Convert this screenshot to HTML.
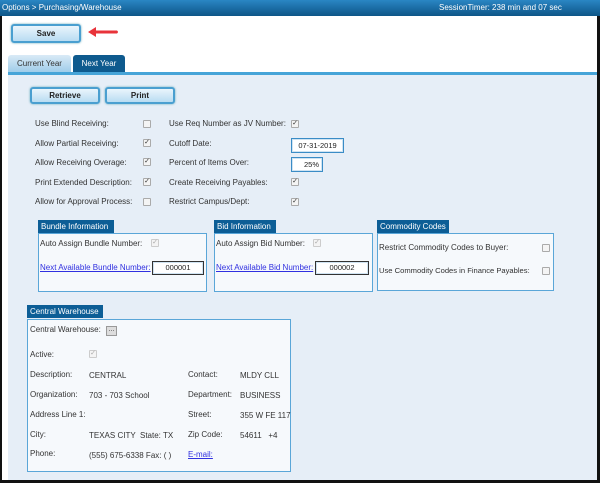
<!DOCTYPE html><html><head><style>
*{margin:0;padding:0;box-sizing:border-box}
body{width:600px;height:483px;position:relative;overflow:hidden;background:#fff;font-family:"Liberation Sans",sans-serif;font-size:8px;color:#333}
.a{position:absolute;white-space:nowrap}
.top{left:0;top:0;width:600px;height:16px;background:linear-gradient(#2a86c4,#0d5587);color:#fff;font-size:8px;line-height:16px}
.btn{position:absolute;border:2px solid #4a9fd0;border-radius:3px;background:linear-gradient(#eaf5fc,#b9dcf2);font-weight:bold;font-size:8px;text-align:center;color:#222;box-shadow:0 0 2px #6ab}
.cb{position:absolute;width:8px;height:8px;border:1px solid #aaa;background:#f4f4f4;border-radius:1px;font-size:7px;line-height:6px;text-align:center;color:#333}
.inp{position:absolute;border:1px solid #3a8cc6;background:#fff;box-shadow:inset 0 0 0 1px #cfe3f2;font-size:7.5px;text-align:center;color:#222}
.tab{position:absolute;background:#0d5e96;color:#fff;font-size:8px;line-height:13px;padding-left:3px;white-space:nowrap;overflow:hidden}
.box{position:absolute;border:1px solid #5aa6d8;background:#f6f9fc}
.lnk{color:#3030e0;text-decoration:underline}
</style></head><body>
<div class="a top"><span style="position:absolute;left:2px">Options &gt; Purchasing/Warehouse</span><span style="position:absolute;left:439px">SessionTimer: 238 min and 07 sec</span></div>
<div class="a" style="left:0;top:16px;width:2px;height:467px;background:#111"></div>
<div class="a" style="left:597px;top:16px;width:3px;height:467px;background:#111"></div>
<div class="a" style="left:0;top:480px;width:600px;height:3px;background:#111"></div>
<div class="btn" style="left:11px;top:24px;width:70px;height:19px;line-height:15px">Save</div>
<svg class="a" style="left:86px;top:26px" width="34" height="12"><path d="M2 6 L10 1 L10 4.5 L31 4.5 Q33 6 31 7.5 L10 7.5 L10 11 Z" fill="#e8333a"/></svg>
<div class="a" style="left:8px;top:55px;width:63px;height:18px;background:linear-gradient(#d9eaf6,#9ccbe9);border-radius:3px 3px 0 0;color:#333;line-height:18px;text-align:center">Current Year</div>
<div class="a" style="left:73px;top:55px;width:52px;height:18px;background:#0e5a8e;border-radius:3px 3px 0 0;color:#fff;line-height:18px;text-align:center">Next Year</div>
<div class="a" style="left:8px;top:72px;width:589px;height:3px;background:#46a4d8"></div>
<div class="a" style="left:8px;top:75px;width:589px;height:405px;background:#e6eef7"></div>
<div class="btn" style="left:30px;top:87px;width:70px;height:17px;line-height:13px">Retrieve</div>
<div class="btn" style="left:105px;top:87px;width:70px;height:17px;line-height:13px">Print</div>
<div class="a" style="left:35px;top:119px">Use Blind Receiving:</div><div class="cb" style="left:143px;top:120px"></div>
<div class="a" style="left:35px;top:139px">Allow Partial Receiving:</div><div class="cb" style="left:143px;top:139px">✓</div>
<div class="a" style="left:35px;top:158px">Allow Receiving Overage:</div><div class="cb" style="left:143px;top:158px">✓</div>
<div class="a" style="left:35px;top:178px">Print Extended Description:</div><div class="cb" style="left:143px;top:178px">✓</div>
<div class="a" style="left:35px;top:197px">Allow for Approval Process:</div><div class="cb" style="left:143px;top:198px"></div>
<div class="a" style="left:169px;top:119px">Use Req Number as JV Number:</div><div class="cb" style="left:291px;top:120px">✓</div>
<div class="a" style="left:169px;top:139px">Cutoff Date:</div><div class="inp" style="left:291px;top:138px;width:53px;height:15px;line-height:13px">07-31-2019</div>
<div class="a" style="left:169px;top:158px">Percent of Items Over:</div><div class="inp" style="left:291px;top:157px;width:32px;height:15px;line-height:13px;text-align:right;padding-right:3px">25%</div>
<div class="a" style="left:169px;top:178px">Create Receiving Payables:</div><div class="cb" style="left:291px;top:178px">✓</div>
<div class="a" style="left:169px;top:197px">Restrict Campus/Dept:</div><div class="cb" style="left:291px;top:198px">✓</div>

<div class="tab" style="left:38px;top:220px;width:76px">Bundle Information</div>
<div class="box" style="left:38px;top:233px;width:169px;height:59px"></div>
<div class="a" style="left:40px;top:239px">Auto Assign Bundle Number:</div><div class="cb" style="left:151px;top:239px;border-color:#ccc;color:#aaa">✓</div>
<div class="a lnk" style="left:40px;top:263px">Next Available Bundle Number:</div><div class="inp" style="left:152px;top:261px;width:52px;height:14px;line-height:12px;border-color:#333">000001</div>
<div class="tab" style="left:214px;top:220px;width:62px">Bid Information</div>
<div class="box" style="left:214px;top:233px;width:159px;height:59px"></div>
<div class="a" style="left:216px;top:239px">Auto Assign Bid Number:</div><div class="cb" style="left:313px;top:239px;border-color:#ccc;color:#aaa">✓</div>
<div class="a lnk" style="left:216px;top:263px">Next Available Bid Number:</div><div class="inp" style="left:315px;top:261px;width:54px;height:14px;line-height:12px;border-color:#333">000002</div>
<div class="tab" style="left:377px;top:220px;width:72px">Commodity Codes</div>
<div class="box" style="left:377px;top:233px;width:177px;height:58px"></div>
<div class="a" style="left:379px;top:243px">Restrict Commodity Codes to Buyer:</div><div class="cb" style="left:542px;top:244px"></div>
<div class="a" style="left:379px;top:266px;font-size:7.6px">Use Commodity Codes in Finance Payables:</div><div class="cb" style="left:542px;top:267px"></div>

<div class="tab" style="left:27px;top:305px;width:76px">Central Warehouse</div>
<div class="box" style="left:27px;top:319px;width:264px;height:153px"></div>
<div class="a" style="left:30px;top:325px">Central Warehouse:</div><div class="a" style="left:106px;top:326px;width:11px;height:10px;background:#ddd;border:1px solid #999;font-size:7px;line-height:5px;text-align:center">...</div>
<div class="a" style="left:30px;top:350px">Active:</div><div class="cb" style="left:89px;top:350px;border-color:#ccc;color:#aaa">✓</div>
<div class="a" style="left:30px;top:370px">Description:</div><div class="a" style="left:89px;top:371px">CENTRAL</div>
<div class="a" style="left:30px;top:390px">Organization:</div><div class="a" style="left:89px;top:391px">703 - 703 School</div>
<div class="a" style="left:30px;top:410px">Address Line 1:</div>
<div class="a" style="left:30px;top:430px">City:</div><div class="a" style="left:89px;top:431px">TEXAS CITY &nbsp;State: TX</div>
<div class="a" style="left:30px;top:449px">Phone:</div><div class="a" style="left:89px;top:451px">(555) 675-6338 Fax: ( )</div>
<div class="a" style="left:188px;top:370px">Contact:</div><div class="a" style="left:240px;top:371px">MLDY CLL</div>
<div class="a" style="left:188px;top:390px">Department:</div><div class="a" style="left:240px;top:391px">BUSINESS</div>
<div class="a" style="left:188px;top:410px">Street:</div><div class="a" style="left:240px;top:411px">355 W FE 117</div>
<div class="a" style="left:188px;top:430px">Zip Code:</div><div class="a" style="left:240px;top:431px">54611 &nbsp; +4</div>
<div class="a lnk" style="left:188px;top:450px">E-mail:</div>
</body></html>
